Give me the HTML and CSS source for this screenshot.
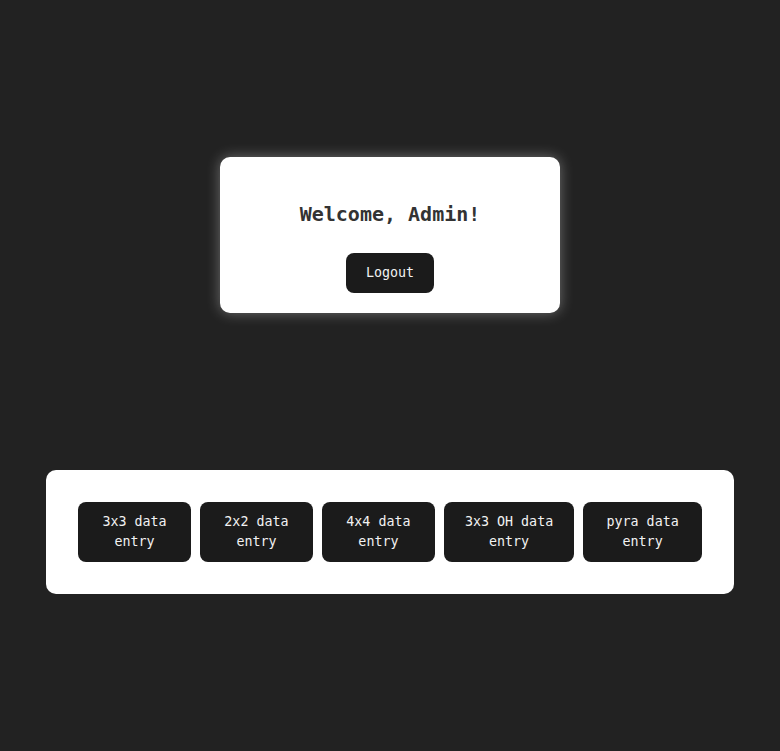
FILE: index.html
```
<!DOCTYPE html>
<html lang="en">

<head>
    <meta charset="UTF-8">
    <meta name="viewport" content="width=device-width, initial-scale=1.0">
    <title>Admin</title>
    <link rel="stylesheet" href="styles.css">
</head>

<body>
    <div class="welcome">
        <h2>Welcome, Admin!</h2>
        <button class="btn">Logout</button>
    </div>

    <div class="entries">
        <button class="btn entry-btn">3x3 data entry</button>
        <button class="btn entry-btn">2x2 data entry</button>
        <button class="btn entry-btn">4x4 data entry</button>
        <button class="btn entry-btn">3x3 OH data entry</button>
        <button class="btn entry-btn">pyra data entry</button>
    </div>
</body>

</html>
```
FILE: styles.css
```
body {
    margin: 0;
    height: 751px;
    background-color: #222222;
    font-family: "DejaVu Sans Mono", "Liberation Mono", monospace;
    display: flex;
    flex-direction: column;
    align-items: center;
    justify-content: space-evenly;
}

.welcome {
    width: 340px;
    height: 156px;
    box-sizing: border-box;
    background-color: white;
    border-radius: 10px;
    padding: 42px 20px 20px;
    text-align: center;
    box-shadow: 0 0 14px rgba(255, 255, 255, 0.35);
}

h2 {
    margin: 0 0 24px;
    font-size: 20px;
    line-height: 30px;
    color: #333333;
}

.btn {
    background-color: #1b1b1b;
    color: #f2f2f2;
    border: none;
    border-radius: 8px;
    font-family: "DejaVu Sans Mono", "Liberation Mono", monospace;
    font-size: 13.333px;
    line-height: 20px;
    padding: 10px 20px;
    cursor: pointer;
}

.entries {
    width: 688px;
    height: 124px;
    box-sizing: border-box;
    background-color: white;
    border-radius: 10px;
    padding: 32px;
    display: flex;
    gap: 9px;
}

.entry-btn {
    padding: 10px 16px;
}
```
